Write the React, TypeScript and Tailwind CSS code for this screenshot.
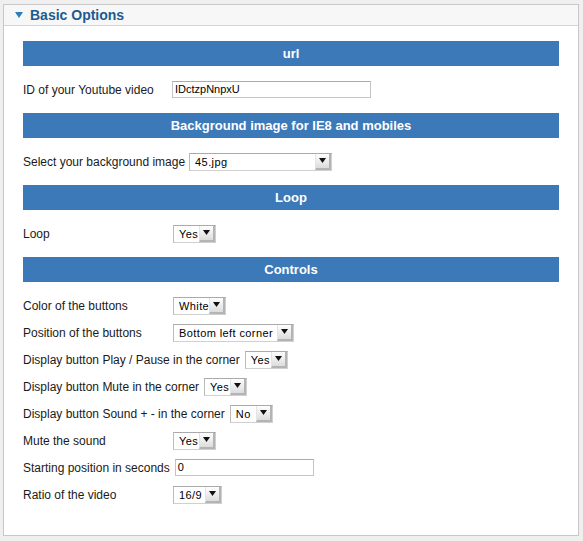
import React from "react";

const font = { fontFamily: '"Liberation Sans", Arial, sans-serif' };

const Bar: React.FC<{ title: string; first?: boolean }> = ({ title, first }) => (
	<div
		className={`${first ? "" : "mt-[10px]"} mb-[10px] h-[25px] bg-[#3c79b8] flex items-center justify-center text-white font-bold text-[13px]`}
	>
		{title}
	</div>
);

const Select: React.FC<{ value: string; width: string }> = ({ value, width }) => (
	<div
		className={`${width} h-[18px] flex items-stretch border border-t-[#aaa] border-l-[#bbb] border-r-[#d0d0d0] border-b-[#d0d0d0] bg-white`}
	>
		<span className="flex-1 pl-[5px] text-[11px] leading-[16px] text-black tracking-[0.4px]">
			{value}
		</span>
		<span className="w-[16px] flex items-center justify-center bg-gradient-to-b from-[#ffffff] to-[#dcdcdc] border-l border-l-[#e4e4e4] border-r-2 border-b-2 border-r-[#b4b4b4] border-b-[#b4b4b4]">
			<svg width="7" height="5" viewBox="0 0 7 5">
				<path d="M0 0h7L3.5 5z" fill="#111" />
			</svg>
		</span>
	</div>
);

const TextInput: React.FC<{ value: string; width: string }> = ({ value, width }) => (
	<div
		className={`${width} h-[17px] border border-[#c4c4c4] border-t-[#ababab] bg-white pl-[2px] text-[11px] leading-[15px] text-black`}
	>
		{value}
	</div>
);

const Row: React.FC<{ label: string; children: React.ReactNode }> = ({ label, children }) => (
	<div className="h-[27px] flex items-center">
		<span className="min-w-[150px] pr-[5px] text-[12px] text-[#1a1a1a]">{label}</span>
		{children}
	</div>
);

export default function App() {
	return (
		<div className="h-[541px] w-[583px] bg-[#efefef] pt-[4px] pl-[3px] pr-[4px]" style={font}>
			<div className="h-[532px] border border-[#c8c8c8] bg-white flex flex-col">
				<div className="h-[21px] bg-[#f7f7f7] border-b border-[#d4d4d4] flex items-center pl-[11px]">
					<svg width="8" height="6" viewBox="0 0 8 6" className="mr-[7px]">
						<path d="M0 0h8L4 6z" fill="#2a7fb8" />
					</svg>
					<span className="text-[14px] font-bold text-[#1c5b91]">Basic Options</span>
				</div>
				<div className="px-[19px] pt-[15px]">
					<Bar title="url" first />
					<Row label="ID of your Youtube video">
						<TextInput value="IDctzpNnpxU" width="w-[199px] ml-[-1px]" />
					</Row>
					<Bar title="Background image for IE8 and mobiles" />
					<Row label="Select your background image">
						<Select value="45.jpg" width="w-[143px] ml-[-1px]" />
					</Row>
					<Bar title="Loop" />
					<Row label="Loop">
						<Select value="Yes" width="w-[43px]" />
					</Row>
					<Bar title="Controls" />
					<Row label="Color of the buttons">
						<Select value="White" width="w-[53px]" />
					</Row>
					<Row label="Position of the buttons">
						<Select value="Bottom left corner" width="w-[121px]" />
					</Row>
					<Row label="Display button Play / Pause in the corner">
						<Select value="Yes" width="w-[43px]" />
					</Row>
					<Row label="Display button Mute in the corner">
						<Select value="Yes" width="w-[43px]" />
					</Row>
					<Row label="Display button Sound + - in the corner">
						<Select value="No" width="w-[43px]" />
					</Row>
					<Row label="Mute the sound">
						<Select value="Yes" width="w-[43px]" />
					</Row>
					<Row label="Starting position in seconds">
						<TextInput value="0" width="w-[139px]" />
					</Row>
					<Row label="Ratio of the video">
						<Select value="16/9" width="w-[49px]" />
					</Row>
				</div>
			</div>
		</div>
	);
}
